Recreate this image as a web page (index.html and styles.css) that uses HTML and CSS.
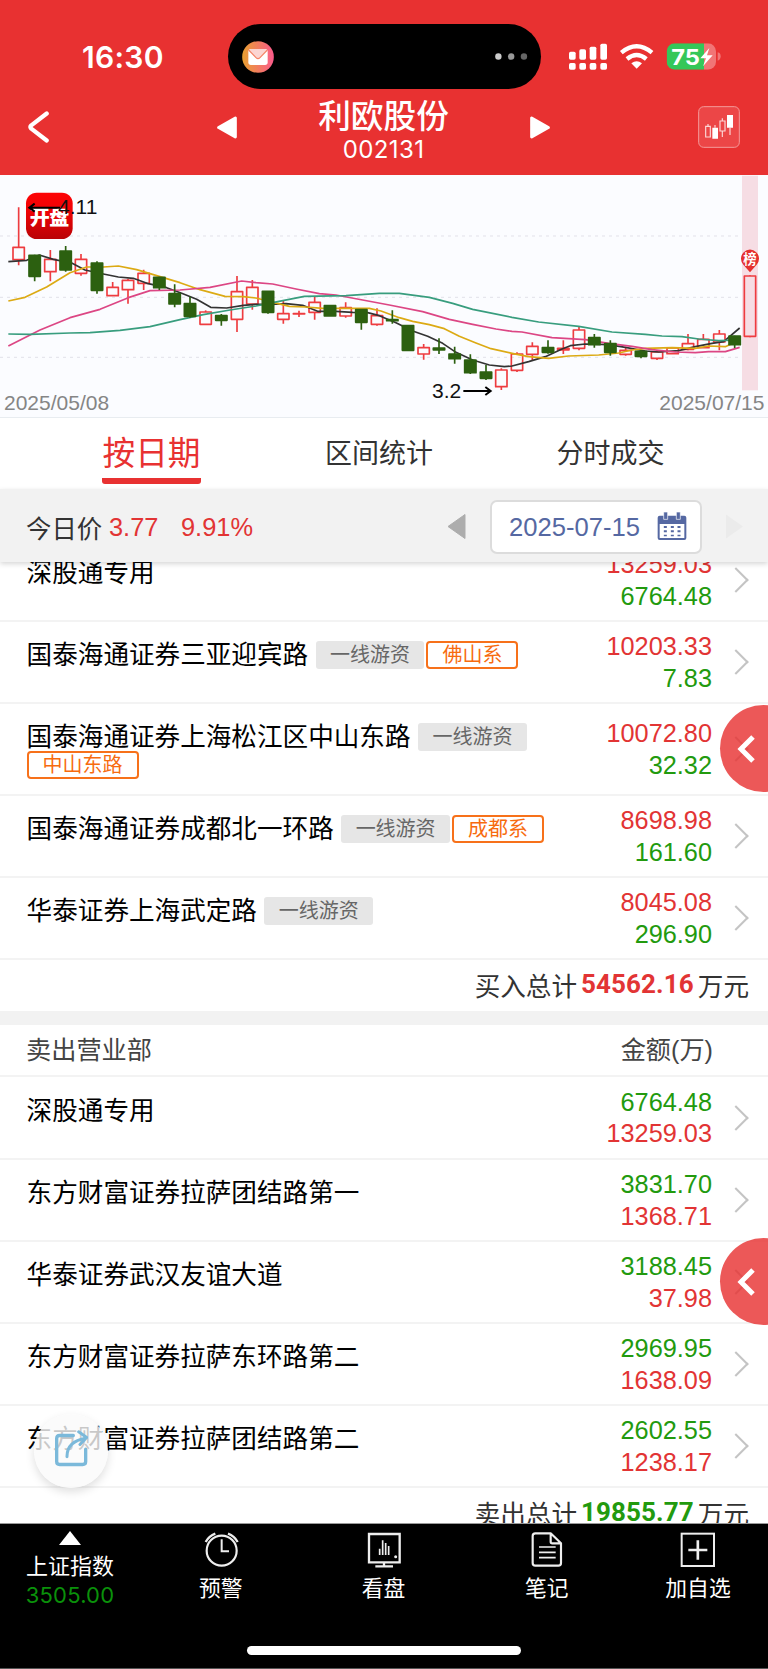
FILE: index.html
```html
<!DOCTYPE html>
<html lang="zh-CN">
<head>
<meta charset="utf-8">
<title>利欧股份 002131</title>
<link rel="stylesheet" href="styles.css">
</head>
<body>
<div class="app">
  <header class="header">
    <div class="status">
      <div class="clock">16:30</div>
      <div class="island">
        <svg class="mail" viewBox="0 0 96 96"><defs><linearGradient id="mg"><stop offset="0" stop-color="#e8a030"/><stop offset="1" stop-color="#fb5a8c"/></linearGradient></defs><circle cx="48" cy="48" r="47.500" fill="url(#mg)"/><rect x="19" y="24" width="58" height="48" rx="8" fill="#fff"/><path d="M21 27Q23 24 28 24H68Q73 24 76 27L54 50Q48 56 42 50Z" fill="#fbd5d2"/><path d="M20 27L42 50Q48 56 54 50L76 27" fill="none" stroke="#f58367" stroke-width="3.500"/></svg>
        <svg class="dots" viewBox="0 0 98 20"><circle cx="10" cy="10" r="9.500" fill="#ccc"/><circle cx="48" cy="10" r="9.500" fill="#999"/><circle cx="86" cy="10" r="9.500" fill="#666"/></svg>
      </div>
      <svg class="signals" viewBox="555 125 456 90">
        <g fill="#fff"><rect x="555" y="154" width="20" height="24" rx="5"/><rect x="586" y="147" width="20" height="31" rx="5"/><rect x="617" y="139" width="20" height="39" rx="5"/><rect x="649" y="130" width="20" height="48" rx="5"/><rect x="555" y="188" width="20" height="20" rx="5"/><rect x="586" y="188" width="20" height="20" rx="5"/><rect x="617" y="188" width="20" height="20" rx="5"/><rect x="649" y="188" width="20" height="20" rx="5"/></g>
        <g fill="none" stroke="#fff" stroke-width="13"><path d="M712 157Q758 119 804 157"/><path d="M729 176Q758 152 787 176"/></g><path d="M742 189Q758 177 774 189L758 205Z" fill="#fff"/>
        <clipPath id="bc"><rect x="848" y="129" width="148" height="79" rx="24"/></clipPath>
        <g clip-path="url(#bc)"><path d="M848 129H960V208H848Z" fill="#34c759"/><path d="M960 129H996V208H960Z" fill="#f17576"/></g>
        <path d="M1001 156Q1010 158 1010 168T1001 181Z" fill="#f17576"/>
        <text x="862" y="194" class="batt" textLength="86" lengthAdjust="spacingAndGlyphs">75</text>
        <path d="M976 143L949 174H966L957 198L986 165H969Z" fill="#fff"/>
      </svg>
    </div>
    <div class="nav">
      <svg class="back" viewBox="0 0 64 96"><path d="M57 7L10 43Q5 48 10 53L57 89" fill="none" stroke="#fff" stroke-width="13" stroke-linecap="round" stroke-linejoin="round"/></svg>
      <svg class="tri" viewBox="0 0 61 68"><path d="M5 34L56 5V63Z" fill="#fff" stroke="#fff" stroke-width="9" stroke-linejoin="round"/></svg>
      <div class="title"><h1>利欧股份</h1><p>002131</p></div>
      <svg class="tri" viewBox="0 0 61 68"><path d="M56 34L5 5V63Z" fill="#fff" stroke="#fff" stroke-width="9" stroke-linejoin="round"/></svg>
      <svg class="kicon" viewBox="0 0 126 126"><rect x="2" y="2" width="122" height="122" rx="15" fill="#ec4647" stroke="#f39b9b" stroke-width="3"/><g fill="none" stroke="#fbd6d6" stroke-width="3.500"><path d="M23 61H37V93H23ZM30 54V61M66 45H81V75H66ZM73 37V45M73 75V93M51 57V65M96 65V87"/></g><path d="M43 65H60V98H43ZM87 27H105V65H87Z" fill="#fff"/></svg>
    </div>
  </header>

  <section class="chart"><svg id="kline" viewBox="0 15 2304 729" width="768" height="243">
    <path d="M0 198H2264M0 382H2264M0 562H2264" stroke="#dcdce4" stroke-width="2.500" stroke-dasharray="9 12"/>
    <rect x="2226" y="17" width="48" height="644" fill="#f6dde4"/>
    <defs><linearGradient id="kp" x2="0" y2="1"><stop offset="0" stop-color="#fd0305"/><stop offset=".4" stop-color="#ef0305"/><stop offset="1" stop-color="#b90306"/></linearGradient></defs>
    <g id="candles" stroke-width="5"></g>
    <g fill="none" stroke-width="5" stroke-linejoin="round">
      <path stroke="#333" d="M25 275L80 271 118 255 160 268 215 279 255 300 310 312 355 321 400 325 445 341 500 353 545 370 590 388 632 412 680 414 730 406 768 403 813 403 858 401 908 406 953 424 1008 424 1058 427 1103 428 1138 437 1188 458 1238 483 1283 499 1328 520 1368 547 1418 570 1468 585 1513 590 1536 588 1586 575 1636 560 1686 537 1711 527 1756 522 1826 524 1876 532 1936 543 1976 546 2036 542 2086 530 2136 520 2171 515 2219 474"/>
      <path stroke="#dcaa14" d="M25 393L75 382 140 351 210 308 260 291 310 291 355 288 410 299 480 320 540 338 600 359 675 379 730 380 768 384 823 398 868 409 918 411 968 415 1108 415 1143 423 1198 443 1238 454 1288 464 1333 476 1378 499 1428 519 1473 536 1536 550 1586 560 1646 565 1706 558 1796 555 1856 549 1896 540 1936 535 2016 533 2086 535 2126 528 2176 530 2219 510"/>
      <path stroke="#dc4684" d="M25 528L120 480 210 443 300 418 385 383 450 362 540 360 630 352 725 333 768 338 818 342 888 357 958 371 1008 375 1088 390 1168 405 1268 425 1348 448 1418 463 1488 477 1536 484 1566 486 1656 503 1756 509 1826 520 1896 529 1956 539 2026 546 2086 548 2126 545 2176 545 2219 532"/>
      <path stroke="#389d7e" d="M25 492L90 493 210 489 270 488 360 481 450 470 540 449 610 434 690 420 768 408 818 398 913 379 1038 377 1138 370 1198 370 1288 382 1358 400 1418 418 1536 442 1616 456 1736 469 1836 486 1936 493 1986 498 2046 500 2096 507 2156 512 2219 510"/>
    </g>
    <g id="bodies" stroke-width="5"></g>
    <rect x="78" y="68" width="140" height="139" rx="32" fill="url(#kp)"/>
    <text x="89" y="165" class="kp" textLength="119">开盘</text>
    <g fill="none" stroke="#000" stroke-width="6"><path d="M88 113H180M104 101L88 113 104 125"/><path d="M1390 663H1470M1456 651L1472 663 1456 675"/></g>
    <text x="174" y="133" class="price">4.11</text>
    <text x="1296" y="683" class="price">3.2</text>
    <path d="M2230 284A27 27 0 1 1 2270 284L2250 307Z" fill="#e5302f"/>
    <text x="2250" y="281" class="pin" text-anchor="middle">榜</text>
    <text x="12" y="721" class="date">2025/05/08</text>
    <text x="1978" y="721" class="date">2025/07/15</text>
  </svg></section>

  <nav class="tabs"><div class="tab on"><span>按日期</span></div><div class="tab"><span>区间统计</span></div><div class="tab"><span>分时成交</span></div></nav>

  <div class="toolbar">
    <span class="lab">今日价</span><span class="up p1">3.77</span><span class="up p2">9.91%</span>
    <svg class="prev" viewBox="0 0 19 25"><path d="M1 12.500L18 .5V24.500Z" fill="#adadad" stroke="#adadad"/></svg>
    <div class="datebox"><span>2025-07-15</span>
      <svg class="cal" viewBox="0 0 90 86"><rect x="2" y="11" width="86" height="73" rx="6" fill="#5568a2"/><path d="M8 36H82V78H8Z" fill="#fff"/><path d="M20 0H32V22H20ZM58 0H70V22H58Z" fill="#5568a2" stroke="#fff" stroke-width="2"/><path d="M25 42V73M46 42V73M66 42V73" stroke="#5568a2" stroke-width="9" stroke-dasharray="6 7"/></svg>
    </div>
    <svg class="next" viewBox="0 0 19 25"><path d="M18 12.500L1 .5V24.500Z" fill="#ebebeb"/></svg>
  </div>

  <main class="list"><div class="scroll">
    <div class="row"><div class="name">深股通专用</div><div class="amt"><b class="up">13259.03</b><b class="down">6764.48</b></div><i class="go"></i></div>
    <div class="row"><div class="name">国泰海通证券三亚迎宾路<span class="tag">一线游资</span><span class="tag o">佛山系</span></div><div class="amt"><b class="up">10203.33</b><b class="down">7.83</b></div><i class="go"></i></div>
    <div class="row tall"><div class="name">国泰海通证券上海松江区中山东路<span class="tag">一线游资</span><br><span class="tag o">中山东路</span></div><div class="amt"><b class="up">10072.80</b><b class="down">32.32</b></div><i class="go"></i></div>
    <div class="row"><div class="name">国泰海通证券成都北一环路<span class="tag">一线游资</span><span class="tag o">成都系</span></div><div class="amt"><b class="up">8698.98</b><b class="down">161.60</b></div><i class="go"></i></div>
    <div class="row"><div class="name">华泰证券上海武定路<span class="tag">一线游资</span></div><div class="amt"><b class="up">8045.08</b><b class="down">296.90</b></div><i class="go"></i></div>
    <div class="total">买入总计<strong class="up">54562.16</strong>万元</div>
    <div class="gap"></div>
    <div class="head"><span>卖出营业部</span><span>金额(万)</span></div>
    <div class="row first"><div class="name">深股通专用</div><div class="amt"><b class="down">6764.48</b><b class="up">13259.03</b></div><i class="go"></i></div>
    <div class="row"><div class="name">东方财富证券拉萨团结路第一</div><div class="amt"><b class="down">3831.70</b><b class="up">1368.71</b></div><i class="go"></i></div>
    <div class="row"><div class="name">华泰证券武汉友谊大道</div><div class="amt"><b class="down">3188.45</b><b class="up">37.98</b></div><i class="go"></i></div>
    <div class="row"><div class="name">东方财富证券拉萨东环路第二</div><div class="amt"><b class="down">2969.95</b><b class="up">1638.09</b></div><i class="go"></i></div>
    <div class="row"><div class="name">东方财富证券拉萨团结路第二</div><div class="amt"><b class="down">2602.55</b><b class="up">1238.17</b></div><i class="go"></i></div>
    <div class="total">卖出总计<strong class="down">19855.77</strong>万元</div>
  </div></main>

  <footer class="bottom">
    <div class="items">
      <div class="index"><svg width="22" height="14" viewBox="0 0 22 14"><path d="M11 0L22 14H0Z" fill="#fff"/></svg><span>上证指数</span><em>3505.00</em></div>
      <div class="item"><svg viewBox="0 0 108 108"><g fill="none" stroke="#eee" stroke-width="6.500"><circle cx="56" cy="56" r="45"/><path d="M56 22V58H78" stroke-width="6"/><path d="M8 30Q18 12 37 5M104 30Q94 12 75 5" stroke-width="7"/></g></svg><span>预警</span></div>
      <div class="item"><svg viewBox="0 0 108 108"><g fill="none" stroke="#eee" stroke-width="7"><path d="M9 6H101V91H9ZM54 91V101M28 103H81"/><path d="M41 50V69M50 25V69M59 33V69M68 42V69" stroke-width="5"/></g><circle cx="89" cy="74" r="4.500" fill="#eee"/></svg><span>看盘</span></div>
      <div class="item"><svg viewBox="0 0 108 108"><g fill="none" stroke="#eee" stroke-width="6.500" stroke-linejoin="round"><path d="M19 4H65L96 34V93Q96 101 88 101H19Q11 101 11 93V12Q11 4 19 4ZM65 6V29Q65 34 70 34H94"/><path d="M30 45H80M30 61H80M30 77H80" stroke-width="5"/></g></svg><span>笔记</span></div>
      <div class="item"><svg viewBox="0 0 108 108"><g fill="none" stroke="#eee"><rect x="5" y="5" width="97" height="97" stroke-width="6"/><path d="M53.500 25V83M25 54H82" stroke-width="8"/></g></svg><span>加自选</span></div>
    </div>
    <div class="home"></div>
  </footer>

  <div class="drawer d1"><svg viewBox="0 0 18 28"><path d="M16 2L4 14L16 26" fill="none" stroke="#fff" stroke-width="5"/></svg></div>
  <div class="drawer d2"><svg viewBox="0 0 18 28"><path d="M16 2L4 14L16 26" fill="none" stroke="#fff" stroke-width="5"/></svg></div>
  <div class="share"><svg viewBox="0 0 102 110"><g fill="none" stroke="#7bb9da" stroke-width="10" stroke-linecap="round" stroke-linejoin="round"><path d="M58 16H17Q8 16 8 25V94Q8 103 17 103H86Q95 103 95 94V57"/><path d="M39 80Q38 33 96 24M74 5L98 22L78 43" stroke-width="9"/></g></svg></div>
</div>
<script src="chart.js"></script>
</body>
</html>
```
FILE: styles.css
```css
* { box-sizing: border-box; margin: 0; padding: 0; }
body { width: 768px; height: 1669px; overflow: hidden; background: #fff; font-family: "Liberation Sans", "Noto Sans CJK SC", sans-serif; color: #000; }
svg { display: block; flex: none; }
.app { position: relative; width: 768px; height: 1669px; display: flex; flex-direction: column; overflow: hidden; }
.up { color: #e23434; }
.down { color: #229a0e; }

.header { height: 175px; background: #e83131; color: #fff; flex: none; }
.status { height: 90px; padding: 24px 0 0 82px; display: flex; }
.clock { width: 145.500px; font: 600 30px/66px Inter, sans-serif; letter-spacing: .3px; }
.island { width: 313px; height: 65px; border-radius: 33px; background: #000; display: flex; align-items: center; justify-content: space-between; padding: 0 13px 0 14px; }
.mail { width: 32px; height: 32px; }
.dots { width: 33px; height: 7px; }
.signals { width: 152px; height: 30px; margin: 17.700px 0 0 28.500px; }
.batt { font: 700 66px Inter, sans-serif; fill: #fff; }
.nav { height: 85px; display: flex; align-items: flex-start; padding: 0 28px; }
.back { width: 21px; height: 32px; margin-top: 21px; margin-right: 168px; }
.tri { width: 20px; height: 23px; margin-top: 25.500px; }
.title { width: 294px; text-align: center; }
.title h1 { font-size: 32.700px; line-height: 44px; font-weight: 500; margin-top: 5px; }
.title p { font: 400 24px/26px Inter, sans-serif; letter-spacing: .4px; margin-top: -2px; }
.kicon { width: 42px; height: 42px; margin: 16px 0 0 148px; }

.chart { height: 243px; background: #fbfcff; border-bottom: 1px solid #e8ecf0; flex: none; overflow: hidden; }
.price { font-size: 63px; fill: #111; }
.date { font-size: 63px; fill: #858585; }
.kp { font-size: 60px; font-weight: 900; fill: #fff; }
.pin { font-size: 40px; font-weight: 700; fill: #fff; }

.tabs { height: 71px; flex: none; display: grid; grid-template-columns: 303px 152px 313px; }
.tab { display: flex; justify-content: center; color: #333; font-size: 27px; line-height: 73px; }
.tab:last-child { padding-right: 2px; }
.tab.on { color: #e83131; font-size: 32.700px; line-height: 71px; }
.tab.on span { height: 66px; border-bottom: 6px solid #e83131; border-radius: 0 0 3px 3px; }

.toolbar { height: 73px; flex: none; background: #f2f2f2; box-shadow: 0 2px 5px rgba(0,0,0,.16); position: relative; z-index: 1; display: flex; align-items: center; padding: 2px 24px 0 26px; font-size: 25.400px; color: #333; }
.p1 { margin-left: 6px; width: 72px; padding-top: 2px; }
.p2 { width: 266px; padding-top: 2px; }
.lab { width: 77px; }
.prev { width: 19px; height: 25px; margin-right: 24px; }
.datebox { width: 212px; height: 54px; border: 2px solid #dcdcdc; border-radius: 7px; background: #fff; display: flex; align-items: center; justify-content: space-between; padding: 0 13px 0 17px; color: #5568a2; }
.datebox span { padding-top: 2px; font-size: 25.600px; }
.cal { width: 30px; height: 28.700px; }
.next { width: 19px; height: 25px; margin-left: auto; }

.list { height: 961px; flex: none; overflow: hidden; }
.scroll { margin-top: -22px; }
.row { height: 82px; display: flex; align-items: center; border-bottom: 2px solid #f3f3f3; padding: 0 20px 0 26.600px; }
.row.tall { height: 92px; }
.row.first { height: 83px; }
.name { flex: 1; align-self: flex-start; padding-top: 19px; font-size: 25.600px; line-height: 28px; white-space: nowrap; }
.row.first .name { padding-top: 20px; }
.tag { display: inline-block; vertical-align: top; height: 28px; line-height: 28px; font-size: 20px; color: #666; background: #e6e6e6; border-radius: 3px; padding: 0 14.400px; margin-left: 7.500px; }
.tag.o { color: #f76b0e; background: #fff; border: 2px solid #f7711a; line-height: 24px; padding: 0 14px; border-radius: 4px; margin-left: 2px; }
br + .tag.o { margin-left: 0; }
.amt { display: flex; flex-direction: column; text-align: right; font-size: 25.300px; line-height: 31.500px; padding-top: 1px; }
.amt b { font-weight: 400; }
.go { width: 18px; height: 18px; border-top: 2.500px solid #c4c4c4; border-right: 2.500px solid #c4c4c4; transform: rotate(45deg); margin: 0 3px 0 15px; }
.total { height: 51px; padding: 0 19px 3px 0; display: flex; justify-content: flex-end; align-items: center; font-size: 25.600px; color: #333; }
.total strong { font: 700 26px Roboto, sans-serif; letter-spacing: .1px; margin: 0 4px; }
.gap { height: 14px; background: #f2f2f2; }
.head { height: 52px; padding: 0 55px 4px 26px; border-bottom: 2px solid #f3f3f3; display: flex; justify-content: space-between; align-items: center; font-size: 25.200px; color: #444; }

.bottom { height: 146px; flex: none; background: #000; color: #fff; border-top: 1px solid #999; border-bottom: 1px solid #555; }
.items { display: grid; grid-template-columns: 140px 161.500px 164px 162.500px 140px; height: 122px; }
.index, .item { display: flex; flex-direction: column; align-items: center; }
.index svg { margin-top: 7px; }
.index span { font-size: 22px; line-height: 30px; margin-top: 7px; }
.index em { font: 400 22px/26px Inter, sans-serif; letter-spacing: .2px; color: #0a910a; }
.item svg { width: 36px; height: 36px; margin-top: 7.500px; }
.item span { font-size: 21.800px; line-height: 30px; margin-top: 6.500px; }
.home { width: 274px; height: 9px; border-radius: 5px; background: #fff; margin: 0 auto; }

.drawer { position: absolute; left: 720px; width: 87px; height: 87px; border-radius: 50%; background: rgba(232,49,49,.81); padding: 30px 0 0 17px; z-index: 2; }
.drawer svg { width: 18px; height: 28px; }
.d1 { top: 705px; }
.d2 { top: 1238px; }
.share { position: absolute; left: 34px; top: 1414px; width: 74px; height: 74px; border-radius: 50%; background: rgba(250,250,250,.8); box-shadow: 0 4px 10px rgba(0,0,0,.13); padding: 16px 0 0 20px; z-index: 2; }
.share svg { width: 34px; height: 37px; }
```
FILE: chart.js
```js
// [up, centre x, high, body top, body bottom, low]
const candles = [
  [1,56,112,232,269,286],[0,104,254,256,319,334],[1,151,240,268,305,334],[0,197,228,243,300,305],
  [1,243,252,268,310,317],[0,291,274,279,361,371],[1,338,336,352,377,377],[1,384,326,331,359,401],
  [1,431,299,310,340,360],[0,478,320,322,353,360],[0,524,343,371,402,412],[0,570,380,401,439,443],
  [1,617,421,426,463,463],[0,664,432,437,451,467],[1,711,318,365,448,486],[1,757,330,352,402,419],
  [0,804,363,364,427,431],[1,850,391,431,448,461],[1,897,422,431,432,441],[1,944,379,397,427,449],
  [0,990,406,407,438,438],[1,1037,397,413,438,443],[0,1084,418,419,457,479],[1,1131,415,437,463,467],
  [0,1177,421,449,452,461],[0,1224,466,467,541,541],[1,1271,522,533,552,569],[0,1317,505,534,540,552],
  [0,1364,530,552,566,581],[0,1411,553,570,608,612],[0,1458,585,606,625,630],[1,1504,595,600,650,660],
  [1,1551,547,552,601,606],[1,1597,517,529,553,570],[0,1644,511,533,547,551],[1,1690,511,535,540,552],
  [1,1737,469,480,535,541],[0,1783,492,503,524,533],[0,1831,511,521,547,557],[1,1877,530,541,553,557],
  [0,1923,540,544,559,565],[1,1971,540,546,565,570],[1,2018,532,534,551,551],[1,2064,492,521,538,541],
  [1,2110,492,508,533,533],[1,2158,480,492,516,541],[0,2204,497,498,524,534],[1,2250,316,318,499,502]
];
let hollow = '';
let solid = '';
for (const [up, x, hi, top, bottom, lo] of candles) {
  const color = up ? '#ee3c40' : '#2c6010';
  const shape = `<path d="M${x} ${hi}V${top}M${x} ${bottom}V${lo}" fill="none" stroke="${color}"/>` +
    `<rect x="${x - 17}" y="${top}" width="34" height="${bottom - top}" fill="${up ? 'none' : color}" stroke="${color}" stroke-linejoin="round"/>`;
  if (up) hollow += shape; else solid += shape;
}
document.getElementById('candles').innerHTML = hollow;
document.getElementById('bodies').innerHTML = solid;
```
